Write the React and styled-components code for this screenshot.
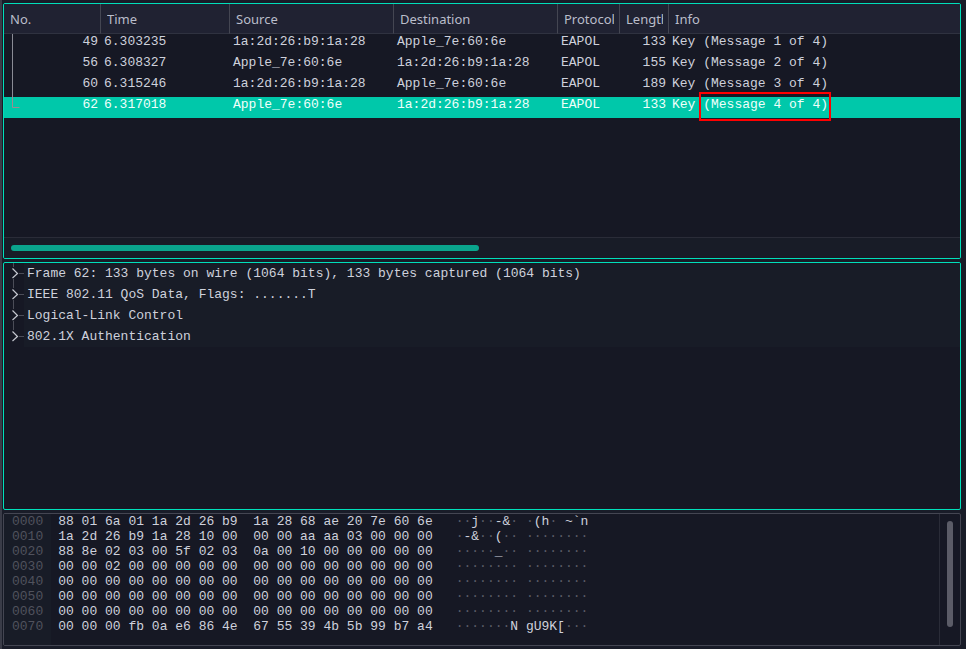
import { useState } from "react";
import styled, { createGlobalStyle, ThemeProvider } from "styled-components";

const theme = {
  color: {
    window: "#191c28",
    edge: "#3a3c48",
    panel: "#161824",
    raised: "#181c27",
    header: "#202232",
    line: "#2a2c38",
    divider: "#444652",
    accent: "#00dfba",
    selected: "#00c8aa",
    thumb: "#0aa58d",
    gray: "#5b5c67",
    dim: "#50525d",
    text: "#ced1dc",
    headerText: "#babdca",
    white: "#f0fffb",
    red: "#ff0000",
  },
  font: {
    mono: '"Liberation Mono", monospace',
    sans: '"Noto Sans", sans-serif',
  },
};

const columns = [
  { title: "No.", width: 97 },
  { title: "Time", width: 129 },
  { title: "Source", width: 164 },
  { title: "Destination", width: 164 },
  { title: "Protocol", width: 62 },
  { title: "Length", width: 49 },
  { title: "Info" },
];

const packets = [
  { no: 49, time: "6.303235", src: "1a:2d:26:b9:1a:28", dst: "Apple_7e:60:6e", length: 133, message: "(Message 1 of 4)" },
  { no: 56, time: "6.308327", src: "Apple_7e:60:6e", dst: "1a:2d:26:b9:1a:28", length: 155, message: "(Message 2 of 4)" },
  { no: 60, time: "6.315246", src: "1a:2d:26:b9:1a:28", dst: "Apple_7e:60:6e", length: 189, message: "(Message 3 of 4)" },
  { no: 62, time: "6.317018", src: "Apple_7e:60:6e", dst: "1a:2d:26:b9:1a:28", length: 133, message: "(Message 4 of 4)" },
];

const layers = [
  "Frame 62: 133 bytes on wire (1064 bits), 133 bytes captured (1064 bits)",
  "IEEE 802.11 QoS Data, Flags: .......T",
  "Logical-Link Control",
  "802.1X Authentication",
];

const zeros = "00 00 00 00 00 00 00 00";

const dump = [
  ["88 01 6a 01 1a 2d 26 b9", "1a 28 68 ae 20 7e 60 6e"],
  ["1a 2d 26 b9 1a 28 10 00", "00 00 aa aa 03 00 00 00"],
  ["88 8e 02 03 00 5f 02 03", "0a 00 10 00 00 00 00 00"],
  ["00 00 02 00 00 00 00 00", zeros],
  [zeros, zeros],
  [zeros, zeros],
  [zeros, zeros],
  ["00 00 00 fb 0a e6 86 4e", "67 55 39 4b 5b 99 b7 a4"],
];

function toAscii(bytes) {
  return bytes
    .split(" ")
    .map((byte) => {
      const code = parseInt(byte, 16);
      return code >= 32 && code < 127 ? String.fromCharCode(code) : "·";
    })
    .join("");
}

function Ascii({ text }) {
  return text
    .split(/(·+)/)
    .map((part, i) =>
      part.startsWith("·") ? <Dots key={i}>{part}</Dots> : part
    );
}

function Conversation({ last }) {
  return (
    <Bracket viewBox="0 0 8 21" aria-hidden="true">
      {last ? (
        <path d="M0.5 0V10.5H7.5" stroke="#9d8a8f" />
      ) : (
        <path d="M0.5 0V21" stroke="#8a8b95" />
      )}
    </Bracket>
  );
}

function PacketList() {
  const [selected, setSelected] = useState(62);

  return (
    <Panel $active>
      <Body>
        <PacketTable>
          <colgroup>
            {columns.map(({ title, width }) => (
              <Col key={title} $width={width} />
            ))}
          </colgroup>
          <thead>
            <tr>
              {columns.map(({ title }) => (
                <HeadCell key={title} scope="col">
                  <HeadLabel>{title}</HeadLabel>
                </HeadCell>
              ))}
            </tr>
          </thead>
          <tbody>
            {packets.map((packet, i) => (
              <PacketRow
                key={packet.no}
                $selected={packet.no === selected}
                onClick={() => setSelected(packet.no)}
              >
                <NumberCell>
                  <NumberBox>
                    <Conversation last={i === packets.length - 1} />
                    <span>{packet.no}</span>
                  </NumberBox>
                </NumberCell>
                <Cell>{packet.time}</Cell>
                <Cell>{packet.src}</Cell>
                <Cell>{packet.dst}</Cell>
                <Cell>EAPOL</Cell>
                <Cell $right>{packet.length}</Cell>
                <Cell>
                  Key{" "}
                  {packet.no === 62 ? (
                    <Marked>{packet.message}</Marked>
                  ) : (
                    packet.message
                  )}
                </Cell>
              </PacketRow>
            ))}
          </tbody>
        </PacketTable>
      </Body>
      <HorizontalBar>
        <Thumb $active style={{ width: `${(468 / 942) * 100}%` }} />
      </HorizontalBar>
    </Panel>
  );
}

function PacketDetails() {
  return (
    <Panel $active>
      <Tree>
        {layers.map((layer, i) => (
          <li key={layer}>
            <Branch type="button" aria-expanded="false">
              <BranchIcon viewBox="0 0 20 21" aria-hidden="true">
                <path
                  d={`M9.5 0V4M15 10.5H20${i < layers.length - 1 ? "M9.5 16V21" : ""}`}
                  stroke="#4b4d58"
                />
                <path d="M8.5 5.5L13.5 10.5L8.5 15" stroke="#c4c7cf" strokeWidth="1.2" />
              </BranchIcon>
              <BranchLabel>{layer}</BranchLabel>
            </Branch>
          </li>
        ))}
      </Tree>
    </Panel>
  );
}

function PacketBytes() {
  return (
    <Panel $row>
      <Dump>
        <Gutter />
        <HexTable>
          <tbody>
            {dump.map(([left, right], i) => (
              <tr key={i}>
                <Offset scope="row">{`00${i}0`}</Offset>
                <HexCell>{`${left}  ${right}`}</HexCell>
                <AsciiCell>
                  <Ascii text={`${toAscii(left)} ${toAscii(right)}`} />
                </AsciiCell>
              </tr>
            ))}
          </tbody>
        </HexTable>
      </Dump>
      <VerticalBar>
        <Thumb style={{ height: `${(106 / 117) * 100}%` }} />
      </VerticalBar>
    </Panel>
  );
}

function App() {
  return (
    <ThemeProvider theme={theme}>
      <GlobalStyle />
      <Window>
        <PacketList />
        <PacketDetails />
        <PacketBytes />
      </Window>
    </ThemeProvider>
  );
}

export default App;

const GlobalStyle = createGlobalStyle`
  * {
    box-sizing: border-box;
  }
  body {
    margin: 0;
    background: ${({ theme }) => theme.color.window};
  }
`;

const Window = styled.main`
  height: 100vh;
  padding: 3px 5px 3px 1px;
  border-left: 2px solid ${({ theme }) => theme.color.edge};
  display: grid;
  grid-template-columns: minmax(0, 1fr);
  grid-template-rows: minmax(0, 256fr) minmax(0, 248fr) minmax(0, 133fr);
  gap: 3px;
  color: ${({ theme }) => theme.color.text};
  font-family: ${({ theme }) => theme.font.mono};
  font-size: 13px;
  line-height: 15px;
`;

const Panel = styled.section`
  display: flex;
  flex-direction: ${({ $row }) => ($row ? "row" : "column")};
  overflow: hidden;
  background: ${({ theme }) => theme.color.panel};
  border: 1px solid
    ${({ $active, theme }) => ($active ? theme.color.accent : theme.color.divider)};
  border-radius: 2px;
`;

const Body = styled.div`
  flex: 1;
  min-height: 0;
  overflow: hidden;
`;

const PacketTable = styled.table`
  width: 100%;
  table-layout: fixed;
  border-collapse: separate;
  border-spacing: 0;
`;

const Col = styled.col`
  width: ${({ $width }) => ($width ? `${$width}px` : "auto")};
`;

const HeadCell = styled.th`
  height: 30px;
  padding: 0 5px 0 6px;
  background: ${({ theme }) => theme.color.header};
  border-right: 1px solid ${({ theme }) => theme.color.divider};
  border-bottom: 1px solid #2f3240;
  color: ${({ theme }) => theme.color.headerText};
  font-family: ${({ theme }) => theme.font.sans};
  font-weight: 400;
  text-align: left;

  &:last-child {
    border-right: 0;
  }
`;

const HeadLabel = styled.div`
  overflow: hidden;
  line-height: 18px;
  white-space: nowrap;
`;

const PacketRow = styled.tr`
  cursor: default;
  ${({ $selected, theme }) =>
    $selected &&
    `
    background: ${theme.color.selected};
    color: ${theme.color.white};
  `}
`;

const Cell = styled.td`
  height: 21px;
  padding: 0 3px 6px;
  text-align: ${({ $right }) => ($right ? "right" : "left")};
  vertical-align: top;
  white-space: nowrap;
`;

const NumberCell = styled(Cell)`
  padding: 0 3px 0 8px;
`;

const NumberBox = styled.div`
  height: 21px;
  display: flex;
  justify-content: space-between;
`;

const Bracket = styled.svg`
  width: 8px;
  height: 21px;
  fill: none;
`;

const Marked = styled.span`
  position: relative;

  &::after {
    content: "";
    position: absolute;
    inset: -5px -3px -9px -4px;
    border: 2px solid ${({ theme }) => theme.color.red};
  }
`;

const HorizontalBar = styled.div`
  height: 21px;
  padding: 7px;
  display: flex;
  background: ${({ theme }) => theme.color.raised};
  border-top: 1px solid ${({ theme }) => theme.color.line};
`;

const VerticalBar = styled.div`
  width: 21px;
  padding: 7px;
  border-left: 1px solid ${({ theme }) => theme.color.line};
`;

const Thumb = styled.div`
  min-width: 6px;
  min-height: 6px;
  border-radius: 3px;
  background: ${({ $active, theme }) =>
    $active ? theme.color.thumb : theme.color.gray};
`;

const Tree = styled.ul`
  margin: 0;
  padding: 0;
  list-style: none;
`;

const Branch = styled.button`
  width: 100%;
  padding: 0;
  display: flex;
  border: 0;
  background: none;
  color: inherit;
  font: inherit;
  text-align: left;
`;

const BranchIcon = styled.svg`
  width: 20px;
  height: 21px;
  flex-shrink: 0;
  fill: none;
`;

const BranchLabel = styled.span`
  flex: 1;
  padding: 3px;
  background: ${({ theme }) => theme.color.raised};
  white-space: nowrap;
`;

const Dump = styled.div`
  flex: 1;
  min-width: 0;
  display: grid;
  grid-template-columns: 47px 1fr;
  overflow: hidden;
`;

const Gutter = styled.div`
  grid-area: 1 / 1;
  background: ${({ theme }) => theme.color.raised};
`;

const HexTable = styled.table`
  grid-area: 1 / 1 / 2 / 3;
  place-self: start;
  border-collapse: collapse;
`;

const Offset = styled.th`
  padding: 0 7px 0 8px;
  color: ${({ theme }) => theme.color.dim};
  font-weight: 400;
`;

const HexCell = styled.td`
  padding: 0 0 0 8px;
  white-space: pre;
`;

const AsciiCell = styled.td`
  padding: 0 0 0 23px;
  white-space: pre;
`;

const Dots = styled.span`
  color: ${({ theme }) => theme.color.gray};
`;
